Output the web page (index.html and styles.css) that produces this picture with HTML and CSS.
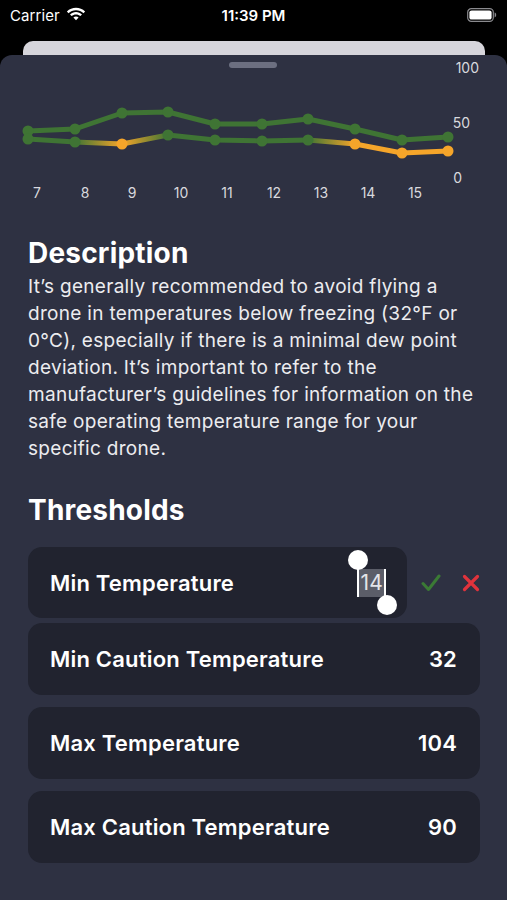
FILE: index.html
```html
<!DOCTYPE html>
<html>
<head>
<meta charset="utf-8">
<link rel="stylesheet" href="styles.css">
</head>
<body>
<div class="status">
  <div class="status-left">
    <span class="carrier">Carrier</span>
    <svg class="wifi" width="20" height="15" viewBox="0 0 20 15">
      <path d="M10 3.2c2.9 0 5.5 1.1 7.5 3l1.6-1.7C16.6 2.1 13.4.8 10 .8S3.4 2.1.9 4.5l1.6 1.7c2-1.9 4.6-3 7.5-3z" fill="#fff"/>
      <path d="M10 7.4c1.7 0 3.2.6 4.4 1.7l1.6-1.7C14.4 5.9 12.3 5 10 5S5.6 5.9 4 7.4l1.6 1.7C6.8 8 8.3 7.4 10 7.4z" fill="#fff"/>
      <path d="M10 9.4c-1 0-1.9.4-2.6 1L10 13.2l2.6-2.8c-.7-.6-1.6-1-2.6-1z" fill="#fff"/>
    </svg>
  </div>
  <div class="time">11:39 PM</div>
  <div class="status-right">
    <svg width="30" height="14" viewBox="0 0 30 14">
      <rect x="0.7" y="0.7" width="25.6" height="12.6" rx="3.6" fill="none" stroke="#8a8a8e" stroke-width="1.2"/>
      <rect x="2.4" y="2.4" width="22.2" height="9.2" rx="2.2" fill="#fff"/>
      <path d="M27.6 4.6c1 .3 1.6 1.2 1.6 2.4s-.6 2.1-1.6 2.4z" fill="#8a8a8e"/>
    </svg>
  </div>
</div>
<div class="backcard"></div>
<div class="sheet">
  <div class="grabber"></div>
  <svg class="chart" width="507" height="137" viewBox="0 68 507 137">
    <defs>
      <linearGradient id="g1" gradientUnits="userSpaceOnUse" x1="75" y1="0" x2="122" y2="0">
        <stop offset="0" stop-color="#3f7434"/><stop offset="1" stop-color="#f5a52a"/>
      </linearGradient>
      <linearGradient id="g2" gradientUnits="userSpaceOnUse" x1="122" y1="0" x2="168" y2="0">
        <stop offset="0" stop-color="#f5a52a"/><stop offset="1" stop-color="#3f7434"/>
      </linearGradient>
      <linearGradient id="g3" gradientUnits="userSpaceOnUse" x1="308" y1="0" x2="355" y2="0">
        <stop offset="0" stop-color="#3f7434"/><stop offset="1" stop-color="#f5a52a"/>
      </linearGradient>
    </defs>
    <g class="axis">
      <text x="479" y="73" text-anchor="end">100</text>
      <text x="470" y="128" text-anchor="end">50</text>
      <text x="462" y="183" text-anchor="end">0</text>
      <text x="37" y="198" text-anchor="middle">7</text>
      <text x="85" y="198" text-anchor="middle">8</text>
      <text x="132" y="198" text-anchor="middle">9</text>
      <text x="181" y="198" text-anchor="middle">10</text>
      <text x="227" y="198" text-anchor="middle">11</text>
      <text x="274" y="198" text-anchor="middle">12</text>
      <text x="321" y="198" text-anchor="middle">13</text>
      <text x="368" y="198" text-anchor="middle">14</text>
      <text x="415" y="198" text-anchor="middle">15</text>
    </g>
    <g fill="none" stroke-width="5" stroke-linecap="round" stroke-linejoin="round">
      <polyline stroke="#3f7434" points="28,131 75,129 122,113 168,112 215,124 262,124 308,119 355,129 402,140 448,137"/>
      <polyline stroke="#3f7434" points="28,139 75,142"/>
      <line stroke="url(#g1)" x1="75" y1="142" x2="122" y2="144"/>
      <line stroke="url(#g2)" x1="122" y1="144" x2="168" y2="135"/>
      <polyline stroke="#3f7434" points="168,135 215,140 262,141 308,140"/>
      <line stroke="url(#g3)" x1="308" y1="140" x2="355" y2="144"/>
      <polyline stroke="#f5a52a" points="355,144 402,153 448,151"/>
    </g>
    <g fill="#3f7434">
      <circle cx="28" cy="131" r="5.5"/><circle cx="75" cy="129" r="5.5"/><circle cx="122" cy="113" r="5.5"/>
      <circle cx="168" cy="112" r="5.5"/><circle cx="215" cy="124" r="5.5"/><circle cx="262" cy="124" r="5.5"/>
      <circle cx="308" cy="119" r="5.5"/><circle cx="355" cy="129" r="5.5"/><circle cx="402" cy="140" r="5.5"/>
      <circle cx="448" cy="137" r="5.5"/>
      <circle cx="28" cy="139" r="5.5"/><circle cx="75" cy="142" r="5.5"/><circle cx="168" cy="135" r="5.5"/>
      <circle cx="215" cy="140" r="5.5"/><circle cx="262" cy="141" r="5.5"/><circle cx="308" cy="140" r="5.5"/>
    </g>
    <g fill="#f5a52a">
      <circle cx="122" cy="144" r="5.5"/><circle cx="355" cy="144" r="5.5"/>
      <circle cx="402" cy="153" r="5.5"/><circle cx="448" cy="151" r="5.5"/>
    </g>
  </svg>
  <div class="content">
    <h2 class="heading">Description</h2>
    <p class="desc">It’s generally recommended to avoid flying a drone in temperatures below freezing (32°F or 0°C), especially if there is a minimal dew point deviation. It’s important to refer to the manufacturer’s guidelines for information on the safe operating temperature range for your specific drone.</p>
    <h2 class="heading heading-thresholds">Thresholds</h2>
    <div class="rows">
      <div class="edit-row">
        <div class="card card-edit">
          <span class="label">Min Temperature</span>
          <span class="field">
            <span class="sel">14</span>
            <span class="handle handle-start"></span>
            <span class="handle handle-end"></span>
          </span>
        </div>
        <div class="actions">
          <svg width="20" height="18" viewBox="0 0 20 18"><path d="M2 9.5l5.5 6L18 2" fill="none" stroke="#3b7a35" stroke-width="3" stroke-linecap="round" stroke-linejoin="round"/></svg>
          <svg width="18" height="18" viewBox="0 0 18 18"><path d="M2.5 2.5l13 13M15.5 2.5l-13 13" fill="none" stroke="#e0333c" stroke-width="3.2" stroke-linecap="round"/></svg>
        </div>
      </div>
      <div class="card"><span class="label">Min Caution Temperature</span><span class="value">32</span></div>
      <div class="card"><span class="label">Max Temperature</span><span class="value">104</span></div>
      <div class="card"><span class="label">Max Caution Temperature</span><span class="value">90</span></div>
    </div>
  </div>
</div>
</body>
</html>
```
FILE: styles.css
```css
* { box-sizing: border-box; }
html, body { margin: 0; padding: 0; }
body {
  background: #000;
  width: 507px;
  height: 900px;
  overflow: hidden;
  font-family: Inter, "Noto Sans", sans-serif;
  color: #fff;
}
.status {
  height: 30px;
  display: flex;
  align-items: center;
  justify-content: space-between;
  padding: 0 10px 0 10px;
  font-size: 15px;
}
.status-left { display: flex; align-items: center; gap: 6px; width: 120px; }
.carrier { font-weight: 400; letter-spacing: 0.1px; }
.wifi { display: block; margin-top: -2px; }
.time { font-weight: 600; }
.status-right { width: 120px; display: flex; justify-content: flex-end; }
.status-right svg { display: block; }
.backcard {
  margin: 11px 22px 0 23px;
  height: 14px;
  background: #d6d5db;
  border-radius: 10px 10px 0 0;
}
.sheet {
  background: #2e3142;
  border-radius: 12px 12px 0 0;
  height: 845px;
  padding-top: 7px;
}
.grabber {
  width: 48px;
  height: 6px;
  border-radius: 3px;
  background: #6c6f80;
  margin: 0 0 0 229px;
}
.chart { display: block; overflow: visible; }
.axis text {
  font-family: Inter, sans-serif;
  font-size: 14px;
  fill: #d9d9de;
}
.content { padding: 0 27px 0 28px; }
.heading {
  margin: 32px 0 0;
  font-size: 28px;
  line-height: 32px;
  font-weight: 700;
  letter-spacing: 0.2px;
}
.desc {
  margin: 4px 0 0;
  font-size: 19px;
  line-height: 27px;
  letter-spacing: 0.3px;
  color: #ececef;
}
.heading-thresholds { margin-top: 32px; }
.rows {
  margin-top: 21px;
  display: flex;
  flex-direction: column;
  gap: 12px;
}
.edit-row {
  display: flex;
  align-items: center;
  margin-bottom: -7px;
}
.card {
  height: 72px;
  background: #21232f;
  border-radius: 14px;
  display: flex;
  align-items: center;
  justify-content: space-between;
  padding: 0 23px 0 22px;
  font-size: 22px;
  font-weight: 600;
  letter-spacing: 0.2px;
}
.card-edit {
  width: 380px;
  height: 71px;
  padding-right: 21px;
}
.field { position: relative; display: flex; }
.sel {
  background: #5b5d68;
  color: #e4e4e8;
  font-weight: 400;
  font-size: 21px;
  line-height: 28px;
  height: 28px;
  padding: 0 1px 0 1px;
  border-left: 2px solid #fff;
  border-right: 2px solid #fff;
}
.handle {
  position: absolute;
  width: 20px;
  height: 20px;
  border-radius: 50%;
  background: #fff;
}
.handle-start { left: -9px; top: -19px; }
.handle-end { right: -11px; top: 26px; }
.actions {
  display: flex;
  align-items: center;
  gap: 21px;
  margin-left: 14px;
}
.actions svg { display: block; }
```
